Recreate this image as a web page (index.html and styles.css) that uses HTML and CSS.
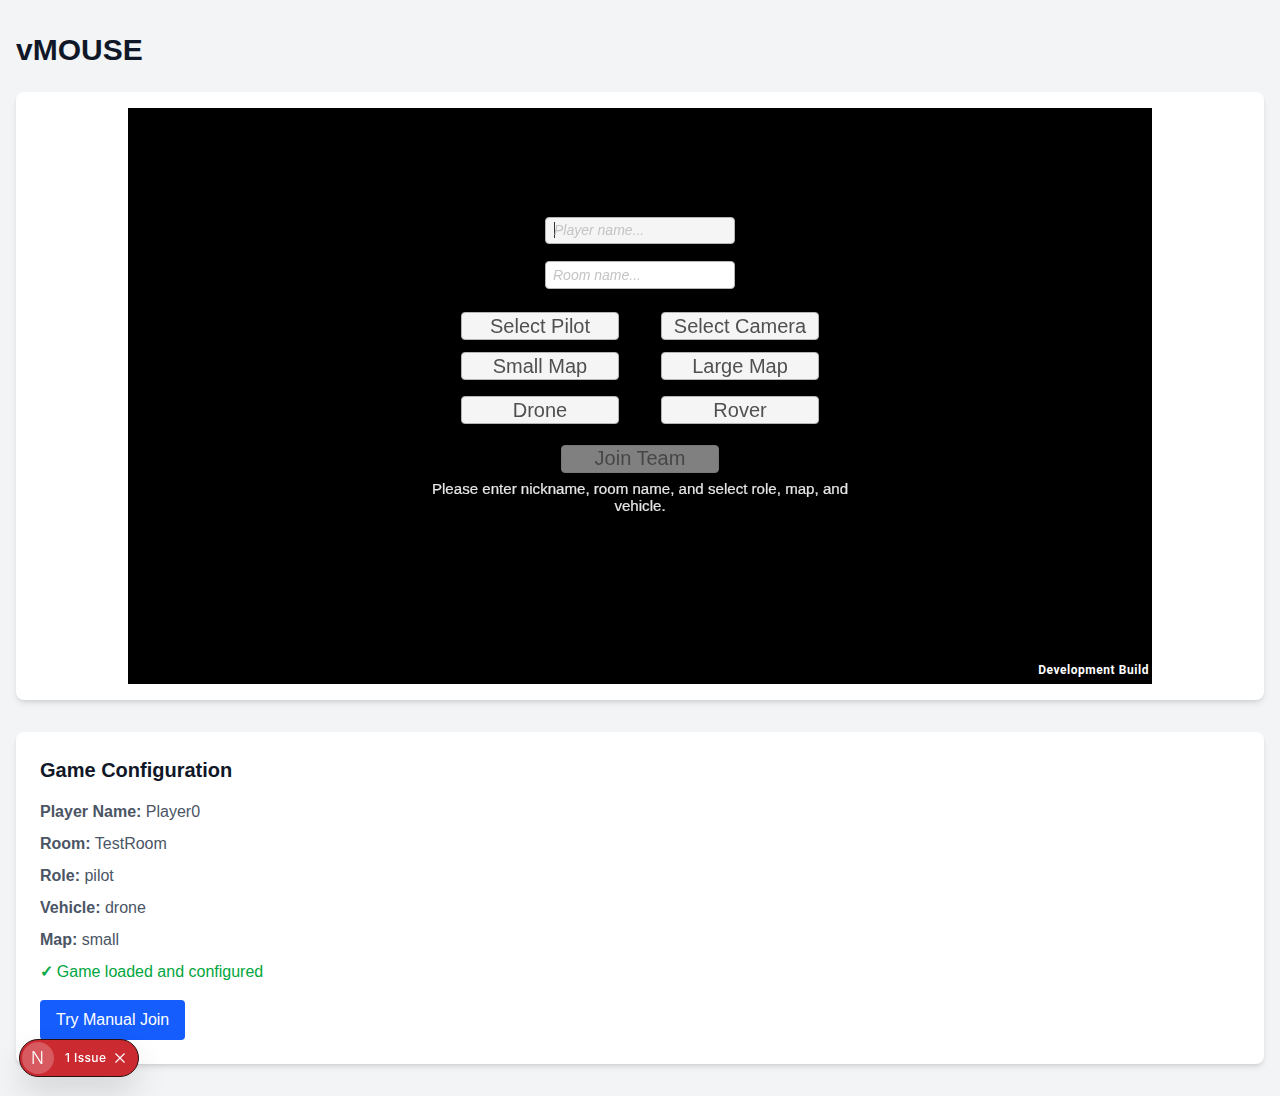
FILE: index.html
```html
<!DOCTYPE html>
<html lang="en">
<head>
<meta charset="UTF-8">
<meta name="viewport" content="width=device-width, initial-scale=1.0">
<title>vMOUSE</title>
<link rel="stylesheet" href="styles.css">
</head>
<body>
  <main class="page">
    <h1 class="title">vMOUSE</h1>

    <section class="card game-card">
      <div class="game">
        <div class="field field-player"><span class="caret"></span><span class="placeholder">Player name...</span></div>
        <div class="field field-room"><span class="placeholder">Room name...</span></div>

        <div class="game-row row-role">
          <button class="game-btn">Select Pilot</button>
          <button class="game-btn">Select Camera</button>
        </div>
        <div class="game-row row-map">
          <button class="game-btn">Small Map</button>
          <button class="game-btn">Large Map</button>
        </div>
        <div class="game-row row-vehicle">
          <button class="game-btn">Drone</button>
          <button class="game-btn">Rover</button>
        </div>

        <button class="game-btn join-btn">Join Team</button>
        <p class="game-msg">Please enter nickname, room name, and select role, map, and vehicle.</p>
        <span class="dev-build">Development Build</span>
      </div>
    </section>

    <section class="card config-card">
      <h2 class="config-title">Game Configuration</h2>
      <p class="config-row"><strong>Player Name:</strong> Player0</p>
      <p class="config-row"><strong>Room:</strong> TestRoom</p>
      <p class="config-row"><strong>Role:</strong> pilot</p>
      <p class="config-row"><strong>Vehicle:</strong> drone</p>
      <p class="config-row"><strong>Map:</strong> small</p>
      <p class="config-row status"><span class="check">✓</span> Game loaded and configured</p>
      <button class="manual-btn">Try Manual Join</button>
    </section>
  </main>

  <div class="issues">
    <span class="issues-logo">N</span>
    <span class="issues-label">1 Issue</span>
    <svg class="issues-close" width="14" height="14" viewBox="0 0 14 14" fill="none" stroke="currentColor" stroke-width="1.2">
      <path d="M2.5 2.5l9 9M11.5 2.5l-9 9"/>
    </svg>
  </div>
</body>
</html>
```

FILE: styles.css
```css
* {
  box-sizing: border-box;
}

body {
  margin: 0;
  background-color: #f3f4f6;
  color: #4a5565;
  font-family: "Liberation Sans", Arial, sans-serif;
  font-size: 16px;
  line-height: 24px;
}

.page {
  padding: 32px 16px 32px;
}

.title {
  margin: 0 0 24px;
  color: #101828;
  font-size: 30px;
  line-height: 36px;
  font-weight: 700;
}

.card {
  background-color: #fff;
  border-radius: 8px;
  box-shadow: 0 4px 6px -1px rgba(0, 0, 0, 0.1), 0 2px 4px -2px rgba(0, 0, 0, 0.1);
}

.game-card {
  padding: 16px;
  margin-bottom: 32px;
}

.game {
  position: relative;
  display: flex;
  flex-direction: column;
  align-items: center;
  width: 1024px;
  height: 576px;
  margin: 0 auto;
  padding-top: 109px;
  background-color: #000;
}

.field {
  display: flex;
  align-items: center;
  width: 190px;
  height: 27px;
  padding: 0 0 1px 8px;
  background-color: #f5f5f5;
  border: 1px solid #b5b5b5;
  border-radius: 4px;
  filter: blur(0.3px);
}

.field-room {
  height: 28px;
  margin-top: 17px;
  padding-left: 7px;
  background-color: #fff;
}

.caret {
  width: 1px;
  height: 16px;
  margin-right: -1px;
  background-color: #333;
}

.placeholder {
  color: #c4c4c4;
  font-size: 14px;
  font-style: italic;
}

.game-row {
  display: flex;
  gap: 42px;
}

.row-role {
  margin-top: 23px;
}

.row-map {
  margin-top: 12px;
}

.row-vehicle {
  margin-top: 16px;
}

.game-btn {
  width: 158px;
  height: 28px;
  padding: 0;
  background-color: #f5f5f5;
  border: 1px solid #b5b5b5;
  border-radius: 4px;
  color: #505050;
  font-family: "Liberation Sans", Arial, sans-serif;
  font-size: 20px;
  line-height: 26px;
  filter: blur(0.3px);
}

.join-btn {
  margin-top: 21px;
  padding-bottom: 2px;
  background-color: #808080;
  border-color: #777;
  color: #464646;
  line-height: 24px;
}

.game-msg {
  width: 440px;
  margin: 7px 0 0;
  color: #e6e6e6;
  font-size: 15.1px;
  line-height: 17px;
  text-align: center;
  -webkit-text-stroke: 0.2px #e6e6e6;
  filter: blur(0.3px);
}

.dev-build {
  position: absolute;
  right: 3px;
  bottom: 6px;
  color: #fff;
  font-family: Roboto, sans-serif;
  font-size: 12px;
  line-height: 16px;
  font-weight: 700;
  letter-spacing: 0.55px;
}

.config-card {
  padding: 24px;
}

.config-title {
  margin: 0 0 16px;
  color: #101828;
  font-size: 20px;
  line-height: 28px;
  font-weight: 700;
}

.config-row {
  margin: 0 0 8px;
}

.status {
  color: #00a63e;
}

.check {
  margin-right: -1px;
  font-family: "DejaVu Sans", sans-serif;
  font-size: 16px;
  -webkit-text-stroke: 0.6px #00a63e;
}

.manual-btn {
  display: block;
  height: 40px;
  margin-top: 16px;
  padding: 0 16px;
  background-color: #155dfc;
  border: none;
  border-radius: 4px;
  color: #fff;
  font-family: "Liberation Sans", Arial, sans-serif;
  font-size: 16px;
}

.issues {
  position: fixed;
  left: 19px;
  top: 1039px;
  display: flex;
  align-items: center;
  width: 120px;
  height: 38px;
  padding: 2px;
  background-color: #ca2a30;
  border: 1px solid #2b1012;
  border-radius: 19px;
  color: #fff;
  box-shadow: 0 16px 32px rgba(0, 0, 0, 0.12);
}

.issues-logo {
  display: flex;
  align-items: center;
  justify-content: center;
  width: 32px;
  height: 32px;
  padding-right: 1px;
  background-color: #d65a60;
  border-radius: 50%;
  font-family: Inter, sans-serif;
  font-size: 17px;
  font-weight: 300;
}

.issues-label {
  margin-left: 11px;
  font-family: Inter, sans-serif;
  font-size: 12px;
  font-weight: 500;
  letter-spacing: 0.4px;
}

.issues-close {
  margin-left: 7px;
}
```
